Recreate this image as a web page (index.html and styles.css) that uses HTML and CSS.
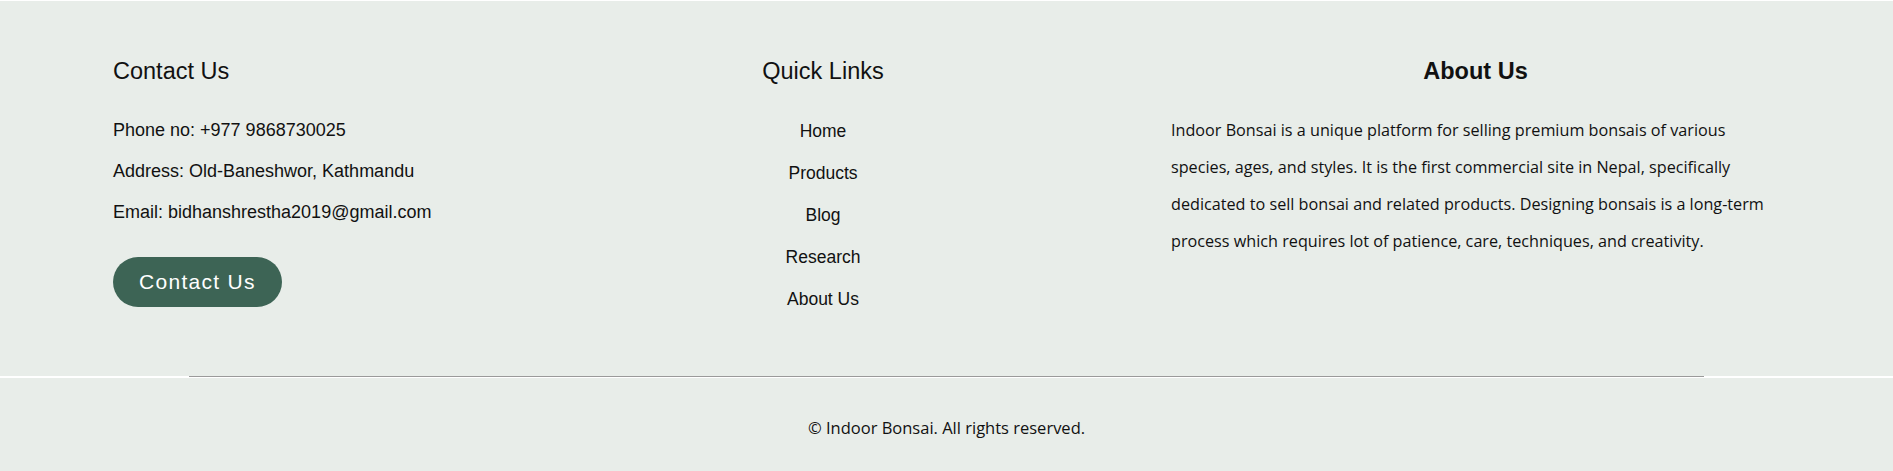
FILE: index.html
```html
<!DOCTYPE html>
<html lang="en">
<head>
<meta charset="utf-8">
<title>Indoor Bonsai Footer</title>
<link rel="stylesheet" href="styles.css">
</head>
<body>
<footer class="footer">
  <div class="footer-top">
    <div class="footer-grid">
      <section class="col col-contact">
        <h3 class="col-title">Contact Us</h3>
        <p class="contact-line">Phone no: +977 9868730025</p>
        <p class="contact-line">Address: Old-Baneshwor, Kathmandu</p>
        <p class="contact-line">Email: bidhanshrestha2019@gmail.com</p>
        <a class="contact-btn" href="#">Contact Us</a>
      </section>
      <section class="col col-links">
        <h3 class="col-title">Quick Links</h3>
        <ul class="link-list">
          <li><a href="#">Home</a></li>
          <li><a href="#">Products</a></li>
          <li><a href="#">Blog</a></li>
          <li><a href="#">Research</a></li>
          <li><a href="#">About Us</a></li>
        </ul>
      </section>
      <section class="col col-about">
        <h3 class="col-title col-title-bold">About Us</h3>
        <p class="about-text">Indoor Bonsai is a unique platform for selling premium bonsais of various species, ages, and styles. It is the first commercial site in Nepal, specifically dedicated to sell bonsai and related products. Designing bonsais is a long-term process which requires lot of patience, care, techniques, and creativity.</p>
      </section>
    </div>
  </div>
  <div class="divider-row"><div class="divider"></div></div>
  <div class="footer-bottom">
    <p class="copyright">© Indoor Bonsai. All rights reserved.</p>
  </div>
</footer>
</body>
</html>
```

FILE: styles.css
```css
html, body {
  margin: 0;
  padding: 0;
  background: #ffffff;
}

body {
  font-family: "Liberation Sans", Arial, sans-serif;
  color: #111111;
}

.footer {
  margin-top: 1px;
}

.footer-top {
  background: #e8ede9;
  height: 375px;
  box-sizing: border-box;
  padding: 55px 113px 0 113px;
}

.footer-grid {
  display: grid;
  grid-template-columns: 362px 610px 1fr;
  column-gap: 43px;
}

.col-title {
  margin: 0;
  font-size: 23.5px;
  line-height: 30px;
  font-weight: 400;
  color: #111111;
}

.col-title-bold {
  font-weight: 700;
  text-align: center;
}

.col-contact .col-title {
  margin-bottom: 24px;
}

.contact-line {
  margin: 0;
  font-size: 18px;
  line-height: 41px;
  color: #111111;
}

.contact-btn {
  display: inline-flex;
  align-items: center;
  margin-top: 24px;
  height: 50px;
  padding: 0 26px;
  border-radius: 25px;
  background: #3d6455;
  color: #ffffff;
  font-size: 21px;
  letter-spacing: 1.3px;
  text-decoration: none;
}

.col-links {
  text-align: center;
}

.link-list {
  list-style: none;
  margin: 24px 0 0 0;
  padding: 0;
}

.link-list li {
  font-size: 17.5px;
  line-height: 42px;
}

.link-list a {
  color: #111111;
  text-decoration: none;
}

.about-text {
  margin: 26px 0 0 0;
  font-family: "Open Sans", "Noto Sans", sans-serif;
  font-size: 16.2px;
  line-height: 37px;
  color: #111111;
}

.divider-row {
  height: 2px;
  background: #ffffff;
}

.divider {
  width: 80%;
  margin: 0 auto;
  height: 1px;
  background: #9a9a9a;
}

.footer-bottom {
  background: #e8ede9;
  height: 93px;
  box-sizing: border-box;
  padding-top: 38px;
}

.copyright {
  margin: 0;
  text-align: center;
  font-family: "Open Sans", "Noto Sans", sans-serif;
  font-size: 16.5px;
  line-height: 24px;
  color: #111111;
}
```
